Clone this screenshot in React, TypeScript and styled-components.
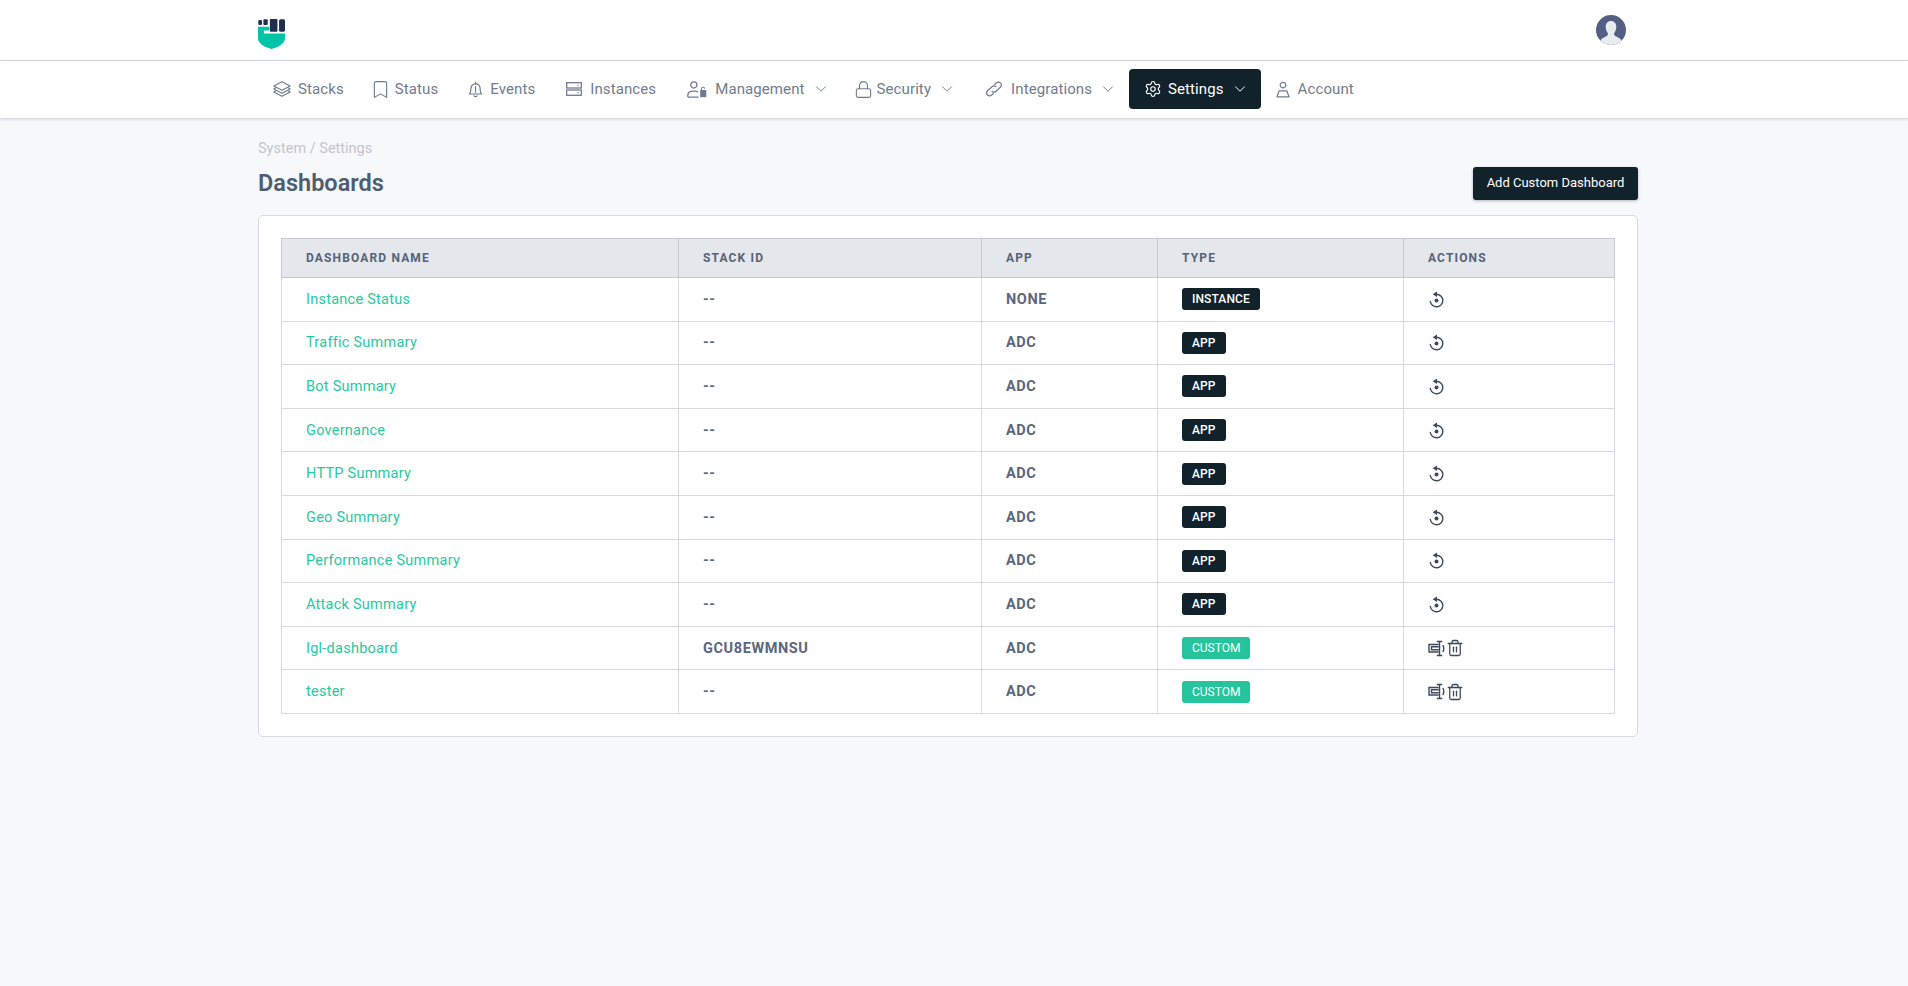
import React from 'react';
import styled, { createGlobalStyle } from 'styled-components';
import { Bookmark, ChevronDown, Lock, Settings, Trash2 } from 'lucide-react';

const FONT = 'Roboto, "Liberation Sans", sans-serif';

const GlobalStyle = createGlobalStyle`
    html, body {
        margin: 0;
        padding: 0;
        background: #f7f8fa;
        font-family: ${FONT};
    }
    * { box-sizing: border-box; }
`;

const Page = styled.div`
    min-height: 986px;
    background: #f7f8fa;
`;

const TopBar = styled.header`
    height: 61px;
    background: #fff;
    border-bottom: 1px solid #d8d9de;
`;

const Container = styled.div`
    width: 1380px;
    margin-left: 258px;
`;

const TopInner = styled(Container)`
    height: 60px;
    display: flex;
    align-items: center;
    justify-content: space-between;
    padding-right: 12px;
`;

const Logo = styled.div`
    display: flex;
    margin-top: 7px;
`;

const NavBar = styled.nav`
    height: 57px;
    background: #fff;
    box-shadow: 0 1px 3px rgba(60, 66, 87, 0.25);
`;

const NavInner = styled(Container)`
    height: 56px;
    display: flex;
    align-items: center;
`;

const NavItem = styled.a<{ $active?: boolean }>`
    height: 40px;
    display: flex;
    align-items: center;
    gap: 6px;
    padding: 0 14px;
    border-radius: 4px;
    font-size: 15px;
    letter-spacing: 0.1px;
    color: ${(p) => (p.$active ? '#fff' : '#6f7c90')};
    background: ${(p) => (p.$active ? '#12222b' : 'transparent')};
`;

const NavIcon = styled.span<{ $w: number }>`
    width: ${(p) => p.$w}px;
    display: flex;
    align-items: center;
    justify-content: center;
    & > svg {
        flex-shrink: 0;
    }
`;

const Caret = styled(ChevronDown)`
    flex-shrink: 0;
    margin: 0 -2px 0 1px;
`;

const Main = styled(Container)`
    padding-top: 22px;
`;

const Crumb = styled.div`
    font-size: 14.5px;
    line-height: 18px;
    color: #c2c5cc;
`;

const TitleRow = styled.div`
    display: flex;
    align-items: center;
    justify-content: space-between;
    margin-top: 9px;
    height: 33px;
`;

const Title = styled.h1`
    margin: 0 0 2px;
    font-size: 23.5px;
    font-weight: 600;
    color: #4f5d73;
`;

const AddButton = styled.button`
    height: 33px;
    width: 165px;
    padding: 0 0 2px;
    border: 0;
    border-radius: 3px;
    background: #12222b;
    color: #fff;
    font-family: ${FONT};
    font-size: 13px;
    box-shadow: 0 1px 3px rgba(18, 34, 43, 0.3);
`;

const Card = styled.section`
    margin-top: 15px;
    padding: 22px 23px 22px 22px;
    background: #fff;
    border: 1px solid #d8d9de;
    border-radius: 5px;
`;

const Table = styled.table`
    width: 100%;
    table-layout: fixed;
    border-collapse: collapse;
`;

const HeadCell = styled.th`
    height: 39px;
    padding: 0 24px;
    text-align: left;
    background: #e4e7ec;
    border: 1px solid #c6c9d1;
    font-size: 12px;
    font-weight: 700;
    letter-spacing: 1.15px;
    color: #566379;
`;

const Row = styled.tr`
    height: 43.6px;
`;

const Cell = styled.td<{ $strong?: boolean }>`
    padding: 0 24px;
    border: 1px solid #d8d9de;
    font-size: 14.5px;
    font-weight: ${(p) => (p.$strong ? 700 : 400)};
    letter-spacing: ${(p) => (p.$strong ? '0.6px' : '0')};
    color: #5a677d;
`;

const NameLink = styled.a`
    color: #27c9a1;
    letter-spacing: 0.25px;
`;

const Badge = styled.span<{ $custom?: boolean }>`
    display: inline-flex;
    align-items: center;
    height: 22px;
    padding: 0 10px;
    border-radius: 3px;
    font-size: 12px;
    font-weight: ${(p) => (p.$custom ? 400 : 500)};
    letter-spacing: ${(p) => (p.$custom ? '0' : '0.1px')};
    color: #fff;
    background: ${(p) => (p.$custom ? '#26c49d' : '#12222b')};
`;

const Actions = styled.div`
    display: flex;
    align-items: center;
    color: #3d4a5c;
`;

const TrashIcon = styled(Trash2)`
    margin-left: 1px;
`;

const Col = styled.col<{ $w: number }>`
    width: ${(p) => p.$w}px;
`;

const LogoMark = () => (
    <svg width="27" height="31" viewBox="0 0 25 31" preserveAspectRatio="none">
        <path d="M0 8.7H10.5V12.5H5.5V15.5H25V20C25 26 18 29.5 12.5 31C7 29.5 0 26 0 20Z" fill="#00c4a7" />
        <g fill="#1f2f50">
            <rect x="0.3" y="2" width="3.4" height="5" rx="1" />
            <rect x="5" y="1.3" width="4" height="5.7" rx="1" />
            <rect x="11" y="1" width="7" height="12.7" rx="1" />
            <rect x="19.5" y="1.3" width="5.5" height="12.4" rx="1.5" />
        </g>
    </svg>
);

const Avatar = () => (
    <svg width="30" height="30" viewBox="0 0 30 30">
        <defs>
            <clipPath id="avatar-clip">
                <circle cx="15" cy="15" r="15" />
            </clipPath>
        </defs>
        <g clipPath="url(#avatar-clip)">
            <rect width="30" height="30" fill="#545f83" />
            <path d="M15 6C11.5 6 9.7 8.5 9.7 11.7C9.7 15 11 17 12 18.5C12.3 20.5 10 21.5 7.5 22.8C5 24 4 25.5 4 30H26C26 25.5 25 24 22.5 22.8C20 21.5 17.7 20.5 18 18.5C19 17 20.3 15 20.3 11.7C20.3 8.5 18.5 6 15 6Z" fill="#e8ecee" />
        </g>
    </svg>
);

const StacksIcon = () => (
    <svg width="18" height="16" viewBox="0 0 18 16" fill="none" stroke="currentColor" strokeWidth="1.1" strokeLinejoin="round">
        <path d="M9 0.7L17.2 5L9 9.3L0.8 5Z" />
        <path d="M3.2 6.6L0.8 8L9 12.3L17.2 8L14.8 6.6" />
        <path d="M3.2 9.6L0.8 11L9 15.3L17.2 11L14.8 9.6" />
    </svg>
);

const BellIcon = () => (
    <svg width="15" height="17" viewBox="0 0 16 18" fill="none" stroke="currentColor" strokeWidth="1.3" strokeLinejoin="round">
        <path d="M1.5 13.8C3 12.5 3.1 11 3.1 8.3C3.1 5.2 5 3 8 3C11 3 12.9 5.2 12.9 8.3C12.9 11 13 12.5 14.5 13.8Z" />
        <path d="M8 1V3M6.3 15.7C7 17 9 17 9.7 15.7M8 6V10M8 11.3V12" strokeLinecap="round" />
    </svg>
);

const ServerIcon = () => (
    <svg width="16" height="14" viewBox="0 0 16 14" fill="none" stroke="currentColor" strokeWidth="1.3">
        <rect x="0.7" y="0.7" width="14.6" height="5.3" />
        <rect x="0.7" y="8" width="14.6" height="5.3" />
        <path d="M11 3.3H13M11 10.7H13" strokeWidth="0.7" />
    </svg>
);

const ManagementIcon = () => (
    <svg width="20" height="17" viewBox="0 0 19 16" fill="none" stroke="currentColor" strokeWidth="1.2">
        <circle cx="6.5" cy="3.7" r="2.9" />
        <path d="M0.8 15.2V13.2C0.8 11 3 9.6 6.5 9.6C8 9.6 9.5 9.9 10.5 10.4M0.8 15.2H11" />
        <rect x="12.5" y="8.5" width="5.8" height="6.8" fill="currentColor" stroke="none" />
        <path d="M13.8 8.5V7.2C13.8 5.5 16.8 5.5 16.8 7.2" strokeWidth="1" />
    </svg>
);

const LinkIcon = () => (
    <svg width="20" height="16" viewBox="0 0 18 16" fill="none" stroke="currentColor" strokeWidth="1.25" strokeLinecap="round">
        <path d="M7.2 10.5C8.5 11.5 10 11.2 11 10.2L15.2 6.5C16.8 5 16.7 3 15.5 1.9C14.2 0.8 12.3 1 11 2.2L9.8 3.3" />
        <path d="M10.8 5.5C9.5 4.5 8 4.8 7 5.8L2.8 9.5C1.2 11 1.3 13 2.5 14.1C3.8 15.2 5.7 15 7 13.8L8.2 12.7" />
    </svg>
);

const AccountIcon = () => (
    <svg width="14" height="17" viewBox="0 0 14 16" fill="none" stroke="currentColor" strokeWidth="1.2" strokeLinejoin="round">
        <circle cx="7" cy="3.6" r="2.8" />
        <path d="M3.2 9.3H10.8L13 15.3H1Z" />
    </svg>
);

const ResetIcon = () => (
    <svg width="17" height="17" viewBox="0 0 17 17" fill="none" stroke="currentColor" strokeWidth="1.4" strokeLinecap="round">
        <path d="M8.5 3.2A6.3 6.3 0 1 1 2.3 10.5" />
        <path d="M9 0.4L4.6 3.2L9 6Z" fill="currentColor" stroke="none" />
        <circle cx="8.5" cy="9.5" r="2" fill="currentColor" stroke="none" />
    </svg>
);

const RenameIcon = () => (
    <svg width="17" height="17" viewBox="0 0 17 17" fill="none" stroke="currentColor" strokeWidth="1.4" strokeLinecap="square">
        <path d="M10 4.5H1V12H10" />
        <path d="M10 6.8H3.5V9.7H10" />
        <path d="M11.5 1.5V15.5M9.5 1.5H13.5M9.5 15.5H13.5" />
        <path d="M15 5.5C16 6.5 16 10.5 15 11.5" strokeLinecap="round" />
    </svg>
);

const dashboards = [
    { name: 'Instance Status', stack: '--', app: 'NONE', type: 'INSTANCE' },
    { name: 'Traffic Summary', stack: '--', app: 'ADC', type: 'APP' },
    { name: 'Bot Summary', stack: '--', app: 'ADC', type: 'APP' },
    { name: 'Governance', stack: '--', app: 'ADC', type: 'APP' },
    { name: 'HTTP Summary', stack: '--', app: 'ADC', type: 'APP' },
    { name: 'Geo Summary', stack: '--', app: 'ADC', type: 'APP' },
    { name: 'Performance Summary', stack: '--', app: 'ADC', type: 'APP' },
    { name: 'Attack Summary', stack: '--', app: 'ADC', type: 'APP' },
    { name: 'Igl-dashboard', stack: 'GCU8EWMNSU', app: 'ADC', type: 'CUSTOM' },
    { name: 'tester', stack: '--', app: 'ADC', type: 'CUSTOM' },
];

const App = () => {
    return (
        <Page>
            <GlobalStyle />
            <TopBar>
                <TopInner>
                    <Logo><LogoMark /></Logo>
                    <Avatar />
                </TopInner>
            </TopBar>
            <NavBar>
                <NavInner>
                    <NavItem><NavIcon $w={20}><StacksIcon /></NavIcon>Stacks</NavItem>
                    <NavItem><NavIcon $w={17}><Bookmark size={21} strokeWidth={1.3} /></NavIcon>Status</NavItem>
                    <NavItem><NavIcon $w={18}><BellIcon /></NavIcon>Events</NavItem>
                    <NavItem><NavIcon $w={21}><ServerIcon /></NavIcon>Instances</NavItem>
                    <NavItem><NavIcon $w={25}><ManagementIcon /></NavIcon>Management<Caret size={18} strokeWidth={1.3} /></NavItem>
                    <NavItem><NavIcon $w={15}><Lock size={19} strokeWidth={1.4} /></NavIcon>Security<Caret size={18} strokeWidth={1.3} /></NavItem>
                    <NavItem><NavIcon $w={23}><LinkIcon /></NavIcon>Integrations<Caret size={18} strokeWidth={1.3} /></NavItem>
                    <NavItem $active><NavIcon $w={19}><Settings size={18} strokeWidth={1.5} /></NavIcon>Settings<Caret size={18} strokeWidth={1.3} /></NavItem>
                    <NavItem><NavIcon $w={17}><AccountIcon /></NavIcon>Account</NavItem>
                </NavInner>
            </NavBar>
            <Main>
                <Crumb>System / Settings</Crumb>
                <TitleRow>
                    <Title>Dashboards</Title>
                    <AddButton>Add Custom Dashboard</AddButton>
                </TitleRow>
                <Card>
                    <Table>
                        <colgroup>
                            <Col $w={397} />
                            <Col $w={303} />
                            <Col $w={176} />
                            <Col $w={246} />
                            <Col $w={211} />
                        </colgroup>
                        <thead>
                            <tr>
                                <HeadCell>DASHBOARD NAME</HeadCell>
                                <HeadCell>STACK ID</HeadCell>
                                <HeadCell>APP</HeadCell>
                                <HeadCell>TYPE</HeadCell>
                                <HeadCell>ACTIONS</HeadCell>
                            </tr>
                        </thead>
                        <tbody>
                            {dashboards.map((d) => (
                                <Row key={d.name}>
                                    <Cell><NameLink>{d.name}</NameLink></Cell>
                                    <Cell $strong>{d.stack}</Cell>
                                    <Cell $strong>{d.app}</Cell>
                                    <Cell><Badge $custom={d.type === 'CUSTOM'}>{d.type}</Badge></Cell>
                                    <Cell>
                                        <Actions>
                                            {d.type === 'CUSTOM' ? (
                                                <>
                                                    <RenameIcon />
                                                    <TrashIcon size={18} strokeWidth={1.7} />
                                                </>
                                            ) : (
                                                <ResetIcon />
                                            )}
                                        </Actions>
                                    </Cell>
                                </Row>
                            ))}
                        </tbody>
                    </Table>
                </Card>
            </Main>
        </Page>
    );
};

export default App;
